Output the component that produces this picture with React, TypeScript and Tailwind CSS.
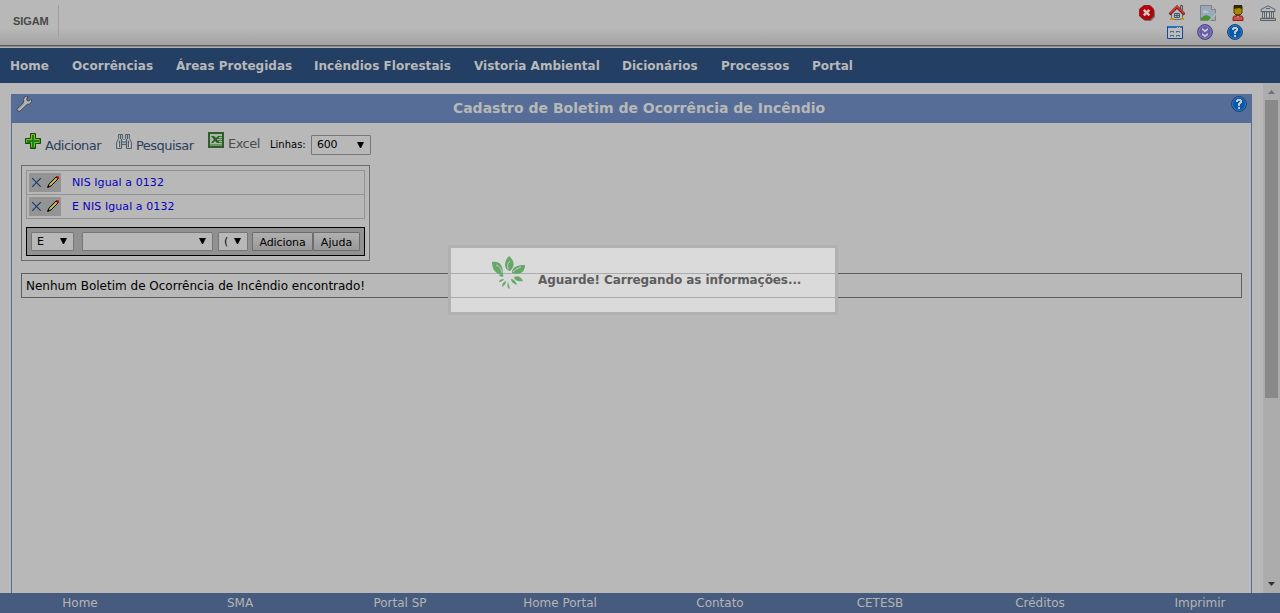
import type { ReactNode } from "react";

function Icon({ children, className = "" }: { children: ReactNode; className?: string }) {
  return (
    <svg viewBox="0 0 16 16" width="16" height="16" className={`block shrink-0 ${className}`}>
      {children}
    </svg>
  );
}

const HelpIcon = () => (
  <Icon>
    <circle cx="8" cy="8" r="7.4" fill="#0759a9" stroke="#163f7c" />
    <circle cx="8" cy="8" r="6.5" fill="none" stroke="#3f80bb" strokeWidth=".8" />
    <path d="M5 6V4h1V3h4v1h1v3h-1v1H9v2H7V7h1V6h1V5H7v1zM7 11h2v2H7z" fill="#c4c8cd" />
  </Icon>
);

const CloseIcon = () => (
  <Icon>
    <path d="M6 1.5h6L16 6v6l-4 4H6l-4-4V6z" fill="#717171" />
    <path d="M5 .5h6L14.5 4v7L11 14.5H5L.5 11V4z" fill="#b90008" stroke="#8d1515" strokeWidth=".8" />
    <path d="M4.8 4.8l5.6 5.6m0-5.6l-5.6 5.6" stroke="#ccc" strokeWidth="2.4" />
  </Icon>
);

const HouseIcon = () => (
  <Icon>
    <path d="M2.5 8v6.5h11V8L8 3z" fill="#b9b9b9" stroke="#68737c" />
    <path d="M1 13h4v2H1zm10 0h4v2h-4z" fill="#c49518" />
    <path d="M11.5.5h2v5h-2z" fill="#aaa" stroke="#555" />
    <path d="M.5 9.5L8 2l7.5 7.5" fill="none" stroke="#751b17" strokeWidth="2.8" />
    <path d="M.8 8.6L8 1.5l7.2 7.1" fill="none" stroke="#d33b31" strokeWidth="1.5" />
    <path d="M5.5 8.5h5v4h-5zM8 8.5v4m-2.5-2h5" fill="none" stroke="#435a72" />
  </Icon>
);

const BrokenIcon = () => (
  <Icon>
    <path d="M.5.5h11l4 4v11H.5z" fill="#98a9bd" stroke="#828282" />
    <path d="M11.5.5v4h4" fill="#bbb" stroke="#858585" />
    <path d="M3 7c0-2 3-3 4-1 2 0 2 2 1 2H3z" fill="#bbc0c4" />
    <path d="M1 15v-2c3-3 6-4 9-1l2 3z" fill="#479234" />
    <path d="M8 16l8-8v2l-6 6z" fill="#b8b8b8" />
  </Icon>
);

const UserIcon = () => (
  <Icon>
    <path d="M4 1h8v7l-2 2H6L4 8z" fill="#a88705" stroke="#4a3b02" />
    <path d="M4 0h8v4l-3-1-5 1z" fill="#302900" />
    <path d="M6 9h4v2H6z" fill="#5b4709" />
    <path d="M4 11h8l1 2v2.5H3V13z" fill="#c65146" stroke="#971b16" />
    <path d="M7 11h2l-1 2z" fill="#d1a49d" />
  </Icon>
);

const BankIcon = () => (
  <Icon>
    <path d="M1 4.5L8 .8l7 3.7v2H1z" fill="#b6bdc2" stroke="#57636c" />
    <path d="M2.5 7h2v6h-2zm4 0h3v6h-3zm5 0h2v6h-2z" fill="#c0c4c7" stroke="#5c6870" />
    <path d="M.5 13.5h15v2H.5z" fill="#a8b0b5" stroke="#56616a" />
    <path d="M6 3.5h4" stroke="#59656d" />
  </Icon>
);

const WindowIcon = () => (
  <Icon>
    <path d="M.5 2.5h15v12H.5z" fill="#b9bec6" stroke="#194886" />
    <path d="M1 2h14v2H1z" fill="#2b70bd" />
    <path d="M10 3h1v1h-1zm2 0h1v1h-1z" fill="#c0d0e0" />
    <path d="M14 3h1v1h-1z" fill="#e04020" />
    <path d="M3 7.5h4m2 0h4M3 11.5h4m2 0h4" stroke="#5f6972" />
    <path d="M3 8h1v1H3zm3 0h1v1H6zm3 0h1v1H9zm3 0h1v1h-1zM3 12h1v1H3zm3 0h1v1H6zm3 0h1v1H9zm3 0h1v1h-1z" fill="#7b858d" />
  </Icon>
);

const DownIcon = () => (
  <Icon>
    <circle cx="8" cy="8" r="7.4" fill="#645eaa" stroke="#464184" />
    <circle cx="8" cy="8" r="6.2" fill="none" stroke="#8580b8" />
    <path d="M5 4l3 2 3-2v2L8 8.2 5 6zm0 5l3 2 3-2v2l-3 2.2L5 11z" fill="#c9c9d0" />
  </Icon>
);

const WrenchIcon = () => (
  <Icon className="-ml-px">
    <path d="M8.5 1l2-.7 1.5.3-1.4 2.2.6 1.9 1.8.3 1.7-1.5 1 .3-.2 2-1.8 2.2-2.5.3-7.3 7-2.1-.3-.8-1.8 6.8-7-.3-2.7z" fill="#b6b6b6" stroke="#3d434b" strokeWidth=".9" />
    <path d="M2.5 13l6-6" stroke="#8b8e91" />
  </Icon>
);

const PlusIcon = () => (
  <Icon>
    <path d="M5.5.5h5v5h5v5h-5v5h-5v-5h-5v-5h5z" fill="#138519" stroke="#0b4d11" />
    <path d="M6.5 14V1.5h3V6.5H14v3H9.5V14M1.5 9.5v-3h5" fill="none" stroke="#a4af16" />
    <path d="M7 2h2v5h5v2H9v5H7V9H2V7h5z" fill="#11861b" />
  </Icon>
);

const SearchIcon = () => (
  <Icon>
    <path d="M2.5.5h4v4l1 1h1l1-1v-4h4v4l2 4v6h-5v-4h-5v4h-5v-6l2-4z" fill="#a6afb4" stroke="#59626a" />
    <path d="M4.5 1v4m7-4v4M3.5 7v6m9-6v6M6 8h4M5.5 5v9m5-9v9" stroke="#4e5961" />
    <path d="M2 9h1v4H2zm11 0h1v4h-1zM7 6h2v1H7z" fill="#cbd0d3" />
  </Icon>
);

const ExcelIcon = () => (
  <Icon>
    <path d="M1 1h14v14H1z" fill="#a7b6a4" stroke="#2e5e29" strokeWidth="2" />
    <path d="M10 4.5h4m-4 2h4m-4 2h4m-4 2h4" stroke="#437a3c" />
    <path d="M3 4h3l2 2 2-2h2L9 7.5l3 3.5H9L7 9l-2 2H3l3-3.5z" fill="#265f25" />
    <path d="M2 13h12" stroke="#70926b" strokeWidth="2" />
  </Icon>
);

const PencilIcon = () => (
  <svg viewBox="0 0 12 12" width="12" height="12" className="block">
    <path d="M1 11l1-3 7-7 2 2-7 7z" fill="#b1a346" stroke="#080808" />
    <path d="M3 9l6-6" stroke="#d0c35b" />
    <path d="M9 0h2l1 1v2h-1L9 1z" fill="#c31413" />
    <path d="M0 12l1-3 2 2z" fill="#080808" />
  </svg>
);

const LeafIcon = () => (
  <svg viewBox="0 0 34 34" width="34" height="34" className="block shrink-0" fill="#67a869">
    <path d="M17 0c6 5 6 11 1 15-7-2-6-10-1-15M0 6c8-1 11 3 11 13C3 18 0 13 0 6M33 9c0 7-5 11-13 8 0-6 5-8 13-8" />
    <path d="M22 21c4-2 7 0 9 4-5 1-8 0-9-4M19 23c3 0 5 3 6 6-3-1-6-3-6-6M16 26l2 7c-3-1-3-4-2-7M14 25c0 3-2 5-4 6 0-3 1-5 4-6M12 23c-1 2-3 3-5 3 0-2 2-3 5-3M12 20c-2 1-4 1-5-1 2-1 4 0 5 1" />
    <path d="M16 13c-1-4 0-6 2-8M10 17C9 12 7 10 4 9m17 7c3-3 5-4 8-5" fill="none" stroke="#d1d9d0" strokeWidth=".8" />
  </svg>
);

const menu = [
  ["Home", "w-[62px]"],
  ["Ocorrências", "w-[104px] tracking-[0.05px]"],
  ["Áreas Protegidas", "w-[138px]"],
  ["Incêndios Florestais", "w-[160px] tracking-[0.05px]"],
  ["Vistoria Ambiental", "w-[148px]"],
  ["Dicionários", "w-[99px]"],
  ["Processos", "w-[91px] tracking-[0.05px]"],
  ["Portal", "w-[60px]"],
];

const footer = ["Home", "SMA", "Portal SP", "Home Portal", "Contato", "CETESB", "Créditos", "Imprimir"];

function Select({ value, className }: { value: string; className: string }) {
  return (
    <button className={`flex shrink-0 items-center justify-between rounded-[1px] border border-[#777] bg-[#b8b8b8] pr-[6px] pl-[5px] text-[11px] ${className}`}>
      <span className="pt-px">{value}</span>
      <svg className="mb-px" width="7" height="6" viewBox="0 0 7 6"><path d="M0 0h7L4 6H3z" /></svg>
    </button>
  );
}

function FilterRow({ text }: { text: string }) {
  return (
    <div className="flex h-6 items-center border-b border-[#929292] pl-[2px]">
      <div className="flex h-[19px] w-8 items-center gap-[6px] bg-[#949494] pl-[3px]">
        <svg width="9" height="9" viewBox="0 0 9 9"><path d="M0 0l9 9M9 0L0 9" stroke="#183d70" strokeWidth="1.2" /></svg>
        <div className="pb-[2px]"><PencilIcon /></div>
      </div>
      <span className="ml-[11px] pt-[2px] text-[11px] tracking-[0.08px] whitespace-nowrap text-[#0900ba]">{text}</span>
    </div>
  );
}

export default function App() {
  return (
    <div className="relative flex h-[613px] w-[1280px] flex-col overflow-hidden bg-[#b8b8b8] font-['DejaVu_Sans',sans-serif] text-black">
      <header className="flex h-12 shrink-0 justify-between border-b border-[#b3b3b3] bg-[linear-gradient(#b8b8b8_0px,#b8b8b8_28px,#aaa_39px,#a4a4a4_45px,#5b5b5b_45px,#5b5b5b_46px,#858585_46px)]">
        <div className="mt-[5px] flex h-8 w-[59px] items-center border-r border-[#a0a0a0] pl-[13px] font-['Liberation_Sans',sans-serif] text-[11px] font-bold tracking-[-0.1px] text-[#484848]">SIGAM</div>
        <div className="flex w-[141px] flex-col gap-[3px] pt-[5px]">
          <div className="flex h-4 gap-[14px]"><CloseIcon /><HouseIcon /><div className="flex gap-[14px] pl-px"><BrokenIcon /><UserIcon /><BankIcon /></div></div>
          <div className="flex h-4 gap-[14px] pl-[28px]"><WindowIcon /><DownIcon /><HelpIcon /></div>
        </div>
      </header>
      <nav className="flex h-[35px] shrink-0 items-center bg-[#243f64] pl-[10px] text-[12px] font-bold text-[#b8b8b8]">
        {menu.map(([label, width]) => <a key={label} className={`${width} shrink-0 whitespace-nowrap`}>{label}</a>)}
      </nav>
      <div className="flex h-[510px] shrink-0">
        <main className="w-[1263px] pt-[11px] pl-[11px]">
          <section className="h-[499px] w-[1241px] border-x border-[#566e97]">
            <div className="flex h-[29px] justify-between bg-[#566e97] pt-[2px] pr-[4px] pl-[5px]">
              <WrenchIcon />
              <h1 className="pt-[2px] pl-[15px] text-[14px] font-bold whitespace-nowrap text-[#b8b8b8]">Cadastro de Boletim de Ocorrência de Incêndio</h1>
              <HelpIcon />
            </div>
            <div className="flex h-[42px] pt-[9px] pl-[13px] text-[13px] tracking-[-0.53px] text-[#2c405c]">
              <div className="flex w-[91px] gap-[4px]"><div className="pt-px"><PlusIcon /></div><span className="pt-[4px]">Adicionar</span></div>
              <div className="flex w-[92px] gap-[4px]"><div className="pt-[2px]"><SearchIcon /></div><span className="pt-[4px]">Pesquisar</span></div>
              <div className="flex w-[62px] gap-[4px]"><ExcelIcon /><span className="pt-[2px] text-[#4b4b50]">Excel</span></div>
              <span className="w-[41px] pt-[5px] text-[10px] tracking-normal whitespace-nowrap text-black">Linhas:</span>
              <Select value="600" className="mt-[3px] h-5 w-[60px] tracking-[-0.3px] text-black" />
            </div>
            <div className="ml-[9px] h-[96px] w-[349px] border border-[#6c6c6c] p-1">
              <div className="h-[49px] border border-b-0 border-[#929292]">
                <FilterRow text="NIS Igual a 0132" />
                <FilterRow text="E NIS Igual a 0132" />
              </div>
              <div className="mt-2 flex h-[29px] items-center border border-black bg-[#919191] pl-1">
                <Select value="E" className="h-[19px] w-[43px]" />
                <Select value="" className="ml-2 h-[19px] w-[131px]" />
                <Select value="(" className="ml-[5px] h-[19px] w-[30px]" />
                <button className="ml-1 h-[19px] w-[61px] rounded-[1px] border border-[#6d6d6d] bg-[linear-gradient(#b0b0b0,#999)] pt-px text-[11px] leading-none tracking-[-0.1px]">Adiciona</button>
                <button className="h-[19px] w-[47px] rounded-[1px] border border-[#6d6d6d] bg-[linear-gradient(#b0b0b0,#999)] pt-px text-[11px] leading-none">Ajuda</button>
              </div>
            </div>
            <div className="mt-3 ml-[9px] flex h-[25px] w-[1221px] items-center border border-[#5e5e5e] pl-1 text-[12px]">Nenhum Boletim de Ocorrência de Incêndio encontrado!</div>
          </section>
        </main>
        <aside className="flex w-[17px] flex-col items-center bg-[#acacac] pt-[7px]">
          <svg width="7" height="4"><path d="M0 4L3.5 0 7 4z" fill="#717171" /></svg>
          <div className="mt-[6px] h-[298px] w-[13px] bg-[#898989]" />
          <svg className="mt-auto mb-[7px]" width="7" height="4"><path d="M0 0h7L3.5 4z" fill="#333" /></svg>
        </aside>
      </div>
      <footer className="flex h-5 shrink-0 items-center bg-[#465b7e] pb-px text-[12px] text-[#b5b5b5]">
        {footer.map((label) => <a key={label} className="w-40 text-center">{label}</a>)}
      </footer>
      <div className="absolute top-[245px] left-[448px] flex h-[70px] w-[390px] border-[3px] border-[#b0b0b0] bg-white/48 bg-clip-padding pt-[8px] pl-[41px]">
        <LeafIcon />
        <span className="ml-[12px] pt-[16px] text-[12px] leading-[17px] font-bold tracking-[-0.08px] whitespace-nowrap text-[#5d5d5d]">Aguarde! Carregando as informações...</span>
      </div>
    </div>
  );
}
